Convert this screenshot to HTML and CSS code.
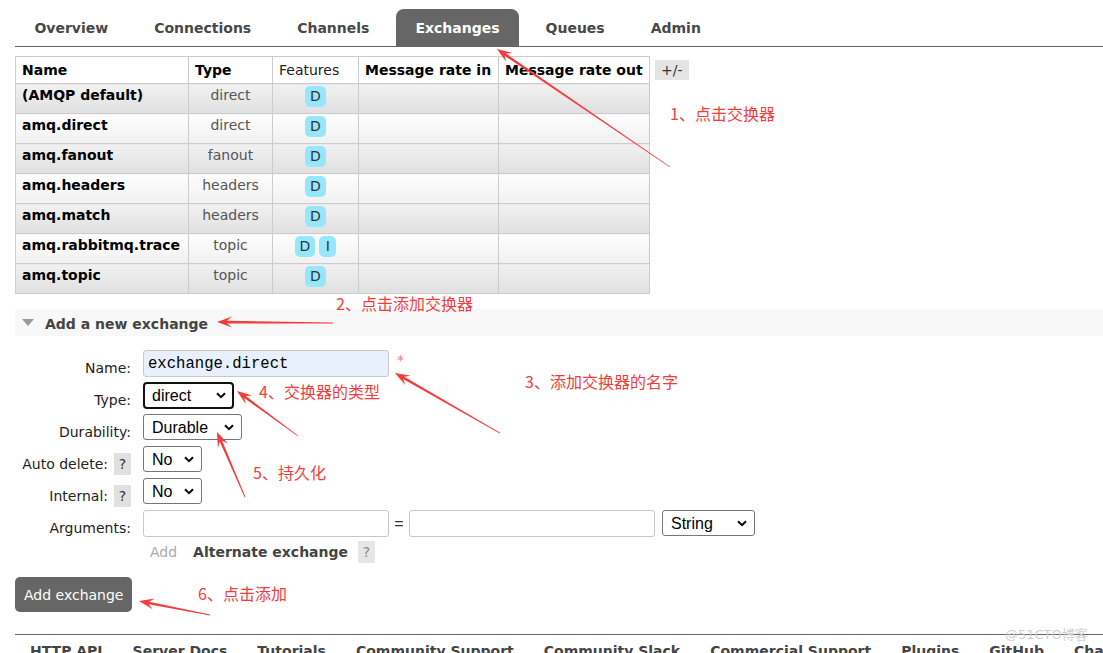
FILE: index.html
```html
<!DOCTYPE html>
<html lang="en">
<head>
<meta charset="utf-8">
<title>Exchanges</title>
<link rel="stylesheet" href="styles.css">
</head>
<body>
<div class="page">
  <ul class="tabs">
    <li><a href="#">Overview</a></li>
    <li><a href="#">Connections</a></li>
    <li><a href="#">Channels</a></li>
    <li><a href="#" class="active">Exchanges</a></li>
    <li><a href="#">Queues</a></li>
    <li><a href="#">Admin</a></li>
  </ul>

  <div class="table-wrap">
    <table class="list">
      <colgroup>
        <col class="c-name"><col class="c-type"><col class="c-feat"><col class="c-in"><col class="c-out">
      </colgroup>
      <thead>
        <tr><th>Name</th><th>Type</th><th class="normal">Features</th><th>Message rate in</th><th>Message rate out</th></tr>
      </thead>
      <tbody>
        <tr class="alt1"><td class="name">(AMQP default)</td><td class="type">direct</td><td class="feat"><span class="badge">D</span></td><td></td><td></td></tr>
        <tr class="alt2"><td class="name">amq.direct</td><td class="type">direct</td><td class="feat"><span class="badge">D</span></td><td></td><td></td></tr>
        <tr class="alt1"><td class="name">amq.fanout</td><td class="type">fanout</td><td class="feat"><span class="badge">D</span></td><td></td><td></td></tr>
        <tr class="alt2"><td class="name">amq.headers</td><td class="type">headers</td><td class="feat"><span class="badge">D</span></td><td></td><td></td></tr>
        <tr class="alt1"><td class="name">amq.match</td><td class="type">headers</td><td class="feat"><span class="badge">D</span></td><td></td><td></td></tr>
        <tr class="alt2"><td class="name">amq.rabbitmq.trace</td><td class="type">topic</td><td class="feat"><span class="badge">D</span><span class="badge badge-i">I</span></td><td></td><td></td></tr>
        <tr class="alt1"><td class="name">amq.topic</td><td class="type">topic</td><td class="feat"><span class="badge">D</span></td><td></td><td></td></tr>
      </tbody>
    </table>
    <span class="toggle">+/-</span>
  </div>

  <div class="section-h"><span class="tri"></span><span class="section-title">Add a new exchange</span></div>

  <div class="form">
    <div class="frow">
      <div class="lbl">Name:</div>
      <input class="txt autofill" type="text" value="exchange.direct">
      <span class="req">*</span>
    </div>
    <div class="frow">
      <div class="lbl">Type:</div>
      <span class="sel"><select class="s-type"><option>direct</option></select><svg class="chev" width="10" height="7" viewBox="0 0 10 7"><path d="M1 1.2 L5 5.2 L9 1.2" fill="none" stroke="#000" stroke-width="2"/></svg></span>
    </div>
    <div class="frow">
      <div class="lbl">Durability:</div>
      <span class="sel"><select class="s-dur"><option>Durable</option></select><svg class="chev" width="10" height="7" viewBox="0 0 10 7"><path d="M1 1.2 L5 5.2 L9 1.2" fill="none" stroke="#000" stroke-width="2"/></svg></span>
    </div>
    <div class="frow">
      <div class="lbl">Auto delete:<span class="help">?</span></div>
      <span class="sel"><select class="s-no"><option>No</option></select><svg class="chev" width="10" height="7" viewBox="0 0 10 7"><path d="M1 1.2 L5 5.2 L9 1.2" fill="none" stroke="#000" stroke-width="2"/></svg></span>
    </div>
    <div class="frow">
      <div class="lbl">Internal:<span class="help">?</span></div>
      <span class="sel"><select class="s-no"><option>No</option></select><svg class="chev" width="10" height="7" viewBox="0 0 10 7"><path d="M1 1.2 L5 5.2 L9 1.2" fill="none" stroke="#000" stroke-width="2"/></svg></span>
    </div>
    <div class="frow">
      <div class="lbl">Arguments:</div>
      <input class="txt" type="text">
      <span class="eq">=</span>
      <input class="txt" type="text">
      <span class="sel sel-str"><select class="s-str"><option>String</option></select><svg class="chev" width="10" height="7" viewBox="0 0 10 7"><path d="M1 1.2 L5 5.2 L9 1.2" fill="none" stroke="#000" stroke-width="2"/></svg></span>
    </div>
    <div class="addrow">
      <span class="add-link">Add</span>
      <span class="alt-ex">Alternate exchange</span>
      <span class="help help-light">?</span>
    </div>
    <button class="btn" type="button">Add exchange</button>
  </div>

  <div class="footer">
    <ul class="flinks">
      <li><a href="#">HTTP API</a></li>
      <li><a href="#">Server Docs</a></li>
      <li><a href="#">Tutorials</a></li>
      <li><a href="#">Community Support</a></li>
      <li><a href="#">Community Slack</a></li>
      <li><a href="#">Commercial Support</a></li>
      <li><a href="#">Plugins</a></li>
      <li><a href="#">GitHub</a></li>
      <li><a href="#">Changelog</a></li>
    </ul>
  </div>
</div>

<svg class="arrows" width="1103" height="653" viewBox="0 0 1103 653">
  <g fill="#f43c3c">
    <polygon points="670.2,166.7 506,53.6 512.5,52.9 497,49 506.3,62 504.5,55.7 669.8,167.3"/>
    <polygon points="333,322.6 227,320.8 232,316.6 217,322 232,327.6 227,323.4 333,323.4"/>
    <polygon points="500.2,432.7 404.3,376.8 410.8,375.7 395,373 405.3,385.2 403,379.1 499.8,433.4"/>
    <polygon points="298.2,435.7 245.8,395.9 252.3,395.5 237,391 245.8,404.3 244.3,398 297.8,436.3"/>
    <polygon points="245.4,496.8 222.2,440.7 228,443.6 217,432 217.9,448 219.8,441.7 244.6,497.2"/>
    <polygon points="210.1,614.6 149.1,601.7 154.8,598.5 139,601 152.7,609.3 148.6,604.2 209.9,615.4"/>
  </g>
</svg>
<span class="note n1">1、点击交换器</span>
<span class="note n2">2、点击添加交换器</span>
<span class="note n3">3、添加交换器的名字</span>
<span class="note n4">4、交换器的类型</span>
<span class="note n5">5、持久化</span>
<span class="note n6">6、点击添加</span>
<span class="watermark">@51CTO博客</span>
</body>
</html>
```

FILE: styles.css
```css
html, body {
  margin: 0;
  padding: 0;
  overflow: hidden;
  background: #fff;
}
body {
  width: 1103px;
  height: 653px;
  position: relative;
  font-family: "DejaVu Sans", Verdana, sans-serif;
  font-size: 14px;
  color: #222;
}
.page {
  padding-left: 15px;
}

/* tabs */
.tabs {
  display: flex;
  gap: 7.6px;
  list-style: none;
  margin: 9px 0 0;
  padding: 0;
  border-bottom: 1px solid #666;
}
.tabs a {
  display: block;
  padding: 10px 19px 8px 19.4px;
  line-height: 19px;
  font-weight: bold;
  color: #484848;
  text-decoration: none;
}
.tabs a.active {
  background: #666;
  color: #fff;
  border-radius: 8px 8px 0 0;
}

/* table */
.table-wrap {
  display: flex;
  align-items: flex-start;
  gap: 5px;
  margin-top: 9px;
}
.list {
  border-collapse: collapse;
  table-layout: fixed;
  width: 634px;
}
.c-name { width: 173px; }
.c-type { width: 84px; }
.c-feat { width: 86px; }
.c-in { width: 140px; }
.c-out { width: 151px; }
.list th, .list td {
  border: 1px solid #ccc;
}
.list th {
  height: 26px;
  padding: 0 6px;
  text-align: left;
  font-weight: bold;
  color: #000;
  background: #fff;
  line-height: 17px;
}
.list th.normal {
  font-weight: normal;
  color: #222;
}
.list td {
  height: 26px;
  padding: 3px 6px 0;
  vertical-align: top;
  line-height: 17px;
}
.alt1 td {
  background: linear-gradient(#f1f1f1, #e0e0e0);
}
.alt2 td {
  background: linear-gradient(#fdfdfd, #f1f1f1);
}
.list td.name {
  font-weight: bold;
  color: #000;
}
.list td.type {
  text-align: center;
  color: #555;
}
.list td.feat {
  text-align: center;
  padding-top: 2px;
}
.badge {
  display: inline-block;
  background: #97e7fc;
  color: #333;
  border-radius: 5px;
  padding: 2px 5px;
  line-height: 17px;
}
.badge-i {
  margin-left: 4px;
  padding: 2px 6.5px;
}
.toggle {
  margin-top: 4px;
  background: #e4e4e4;
  color: #333;
  padding: 0 6px;
  line-height: 20px;
}

/* section header */
.section-h {
  margin-top: 15px;
  height: 27px;
  background: #f8f8f8;
  display: flex;
  align-items: center;
  gap: 11px;
  padding-left: 7px;
  font-weight: bold;
  color: #444;
}
.section-title {
  margin-top: 3px;
}
.tri {
  width: 0;
  height: 0;
  border-left: 6px solid transparent;
  border-right: 6px solid transparent;
  border-top: 7px solid #999;
}

/* form */
.form {
  padding-top: 14px;
}
.frow {
  display: flex;
  align-items: flex-start;
  height: 27px;
  margin-bottom: 5px;
}
.lbl {
  width: 116px;
  margin-right: 12px;
  height: 22px;
  padding-top: 7px;
  display: flex;
  justify-content: flex-end;
  align-items: center;
  gap: 6px;
  color: #222;
}
.help {
  display: inline-block;
  width: 17px;
  height: 22px;
  line-height: 22px;
  text-align: center;
  background: #e0e0e0;
  color: #333;
}
.lbl .help {
  margin-top: -1px;
}
.help-light {
  background: #e6e6e6;
  color: #888;
}
.txt {
  box-sizing: border-box;
  width: 246px;
  height: 27px;
  margin: 0;
  border: 1px solid #c8c8c8;
  border-radius: 3px;
  padding: 0 4px;
  font-family: "Liberation Mono", "DejaVu Sans Mono", monospace;
  font-size: 15.6px;
  color: #000;
  background: #fff;
}
.txt.autofill {
  background: #e8f0fe;
}
.req {
  margin-left: 8px;
  color: #f47c7c;
  line-height: 20px;
  font-size: 14px;
}
.eq {
  width: 20px;
  text-align: center;
  line-height: 27px;
  font-family: "Liberation Sans", Arial, sans-serif;
  font-size: 16px;
  color: #333;
}
.sel {
  position: relative;
  display: inline-block;
  height: 27px;
}
.sel-str {
  margin-left: 7px;
}
.sel select {
  appearance: none;
  -webkit-appearance: none;
  box-sizing: border-box;
  height: 26px;
  margin: 0;
  border: 1px solid #767676;
  border-radius: 3px;
  padding: 0 0 0 8px;
  background: #fff;
  color: #000;
  font-family: "Liberation Sans", Arial, sans-serif;
  font-size: 16px;
}
.sel select.s-type {
  width: 91px;
  height: 27px;
  border: 2px solid #111;
  border-radius: 4px;
  padding-left: 7px;
}
.sel select.s-dur { width: 99px; }
.sel select.s-no { width: 59px; }
.sel select.s-str { width: 93px; }
.chev {
  position: absolute;
  right: 8px;
  top: 10px;
  pointer-events: none;
}
.addrow {
  display: flex;
  align-items: center;
  height: 22px;
  margin-top: -1px;
  padding-left: 135px;
}
.add-link {
  color: #aaa;
  margin-right: 16px;
}
.alt-ex {
  font-weight: bold;
  color: #444;
  margin-right: 10px;
}
.btn {
  display: block;
  margin-top: 14px;
  height: 35px;
  padding: 0 9px;
  border: none;
  border-radius: 5px;
  background: #666;
  color: #fff;
  font-family: "DejaVu Sans", Verdana, sans-serif;
  font-size: 14px;
}

/* footer */
.footer {
  margin-top: 22px;
  border-top: 1px solid #666;
}
.flinks {
  display: flex;
  list-style: none;
  margin: 0;
  padding: 8px 0 0;
  white-space: nowrap;
}
.flinks a {
  display: block;
  padding: 0 15px;
  line-height: 17px;
  font-weight: bold;
  color: #444;
  text-decoration: none;
}

/* annotations overlay */
.arrows {
  position: absolute;
  left: 0;
  top: 0;
  pointer-events: none;
}
.note {
  position: absolute;
  font-family: "Noto Sans CJK SC", sans-serif;
  font-size: 16px;
  line-height: 16px;
  color: #f43c3c;
  white-space: nowrap;
}
.n1 { left: 670px; top: 105px; }
.n2 { left: 336px; top: 295px; }
.n3 { left: 525px; top: 373px; }
.n4 { left: 259px; top: 383px; }
.n5 { left: 253px; top: 464px; }
.n6 { left: 198px; top: 585px; }
.watermark {
  position: absolute;
  left: 1005px;
  top: 628px;
  font-family: "DejaVu Sans", "Noto Sans CJK SC", sans-serif;
  font-size: 13px;
  line-height: 14px;
  color: #cfcfcf;
}
```
